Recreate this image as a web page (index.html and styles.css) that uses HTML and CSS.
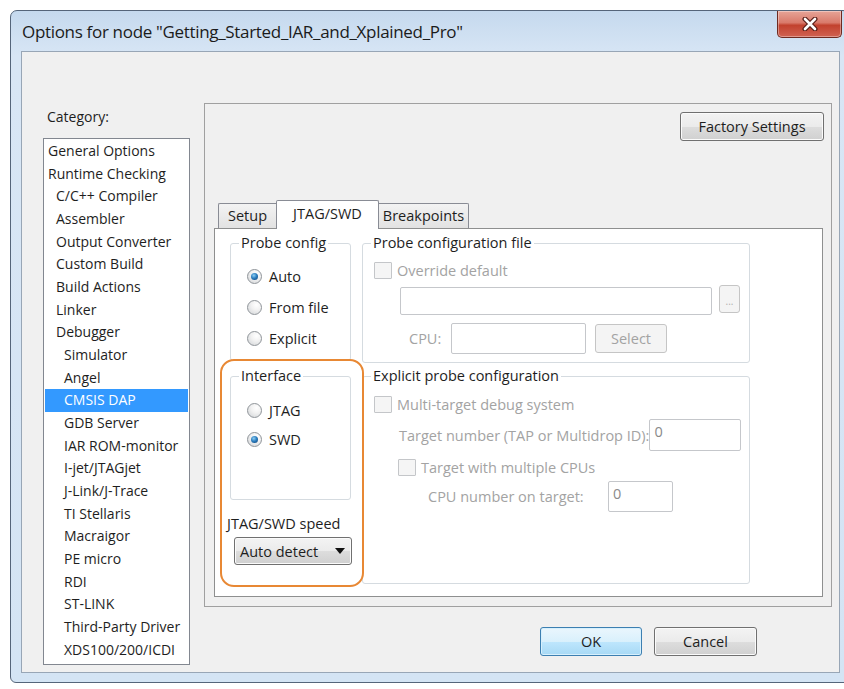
FILE: index.html
```html
<!DOCTYPE html>
<html>
<head>
<meta charset="utf-8">
<title>Options</title>
<link rel="stylesheet" href="styles.css">
</head>
<body>
<div class="window">
  <div class="titlebar">
    <span class="title">Options for node "Getting_Started_IAR_and_Xplained_Pro"</span>
    <div class="close">
      <svg width="18" height="14" viewBox="0 0 18 14">
        <path d="M4 2 L14 12 M14 2 L4 12" stroke="#5a1f18" stroke-width="5" stroke-linecap="round" fill="none"/>
        <path d="M4 2 L14 12 M14 2 L4 12" stroke="#ffffff" stroke-width="2.6" stroke-linecap="round" fill="none"/>
      </svg>
    </div>
  </div>
  <div class="client">
    <div class="leftcol">
      <div class="cat-label">Category:</div>
      <ul class="catlist">
        <li class="l0">General Options</li>
        <li class="l0">Runtime Checking</li>
        <li class="l1">C/C++ Compiler</li>
        <li class="l1">Assembler</li>
        <li class="l1">Output Converter</li>
        <li class="l1">Custom Build</li>
        <li class="l1">Build Actions</li>
        <li class="l1">Linker</li>
        <li class="l1">Debugger</li>
        <li class="l2">Simulator</li>
        <li class="l2">Angel</li>
        <li class="l2 sel">CMSIS DAP</li>
        <li class="l2">GDB Server</li>
        <li class="l2">IAR ROM-monitor</li>
        <li class="l2">I-jet/JTAGjet</li>
        <li class="l2">J-Link/J-Trace</li>
        <li class="l2">TI Stellaris</li>
        <li class="l2">Macraigor</li>
        <li class="l2">PE micro</li>
        <li class="l2">RDI</li>
        <li class="l2">ST-LINK</li>
        <li class="l2">Third-Party Driver</li>
        <li class="l2">XDS100/200/ICDI</li>
      </ul>
    </div>
    <div class="rightcol">
      <div class="panel">
        <div class="panel-top"><div class="btn factory">Factory Settings</div></div>
        <div class="tabs">
          <div class="tab t-setup">Setup</div>
          <div class="tab t-jtag active">JTAG/SWD</div>
          <div class="tab t-bp">Breakpoints</div>
        </div>
        <div class="pane">
          <div class="pcol pleft">
            <fieldset class="grp g-probe">
              <legend>Probe config</legend>
              <div class="opts">
                <div class="radio-row"><span class="radio on"></span><span>Auto</span></div>
                <div class="radio-row"><span class="radio"></span><span>From file</span></div>
                <div class="radio-row"><span class="radio"></span><span>Explicit</span></div>
              </div>
            </fieldset>
            <fieldset class="grp g-iface">
              <legend>Interface</legend>
              <div class="opts opts-iface">
                <div class="radio-row r29"><span class="radio"></span><span>JTAG</span></div>
                <div class="radio-row r29"><span class="radio on"></span><span>SWD</span></div>
              </div>
            </fieldset>
            <div class="speed-label">JTAG/SWD speed</div>
            <div class="combo"><span>Auto detect</span><span class="arrow"></span></div>
          </div>
          <div class="pcol pright">
            <fieldset class="grp g-file">
              <legend>Probe configuration file</legend>
              <div class="inner">
                <div class="chk-row"><span class="chk"></span><span class="dis">Override default</span></div>
                <div class="file-row"><div class="input file-input"></div><div class="dots">...</div></div>
                <div class="cpu-row"><span class="dis cpu-label">CPU:</span><div class="input cpu-input"></div><div class="btn-dis">Select</div></div>
              </div>
            </fieldset>
            <fieldset class="grp g-explicit">
              <legend>Explicit probe configuration</legend>
              <div class="inner">
                <div class="chk-row"><span class="chk"></span><span class="dis">Multi-target debug system</span></div>
                <div class="tn-row"><span class="dis">Target number (TAP or Multidrop ID):</span><div class="input num tn-input">0</div></div>
                <div class="chk-row mc-row"><span class="chk"></span><span class="dis">Target with multiple CPUs</span></div>
                <div class="cn-row"><span class="dis cn-label">CPU number on target:</span><div class="input num cn-input">0</div></div>
              </div>
            </fieldset>
          </div>
          <div class="highlight"></div>
        </div>
      </div>
      <div class="dlg-buttons">
        <div class="btn ok">OK</div>
        <div class="btn cancel">Cancel</div>
      </div>
    </div>
  </div>
</div>
</body>
</html>
```
FILE: styles.css
```css
* { box-sizing: border-box; }
html, body { margin: 0; padding: 0; }
body {
  width: 844px;
  height: 689px;
  overflow: hidden;
  background: #ffffff;
  font-family: "Open Sans", "Noto Sans", sans-serif;
  font-size: 14px;
  color: #1e1e1e;
}

.window {
  margin: 10px 0 0 10px;
  width: 840px;
  height: 673px;
  border: 1px solid #55657a;
  border-radius: 7px 7px 6px 6px;
  background: linear-gradient(#c5d9ee, #d8e6f5 45px, #d4e4f4);
  padding: 0 0 0 10px;
}

.titlebar {
  display: flex;
  align-items: flex-start;
  height: 40px;
}
.title {
  margin: 11px 0 0 1px;
  font-size: 17px;
  line-height: 20px;
  color: #1b1b1b;
  letter-spacing: -0.32px;
}
.close {
  margin-left: auto;
  margin-right: 7px;
  width: 65px;
  height: 27px;
  border: 1px solid #6e2a21;
  border-top: none;
  border-radius: 0 0 5px 5px;
  background: linear-gradient(#e6a497 0%, #d97a6b 45%, #c2412e 55%, #d06252 100%);
  display: flex;
  align-items: center;
  justify-content: center;
  box-shadow: inset 0 0 0 1px rgba(255,255,255,0.35);
}

.client {
  width: 819px;
  height: 622px;
  border: 1px solid #98a6b6;
  background: #f0f0f0;
  display: flex;
  align-items: flex-start;
  padding: 51px 0 0 21px;
}

.leftcol { width: 147px; }
.cat-label {
  margin: 4px 0 0 4px;
  line-height: 20px;
  font-size: 14px;
}
.catlist {
  list-style: none;
  margin: 11px 0 0 0;
  padding: 1px 1px;
  width: 147px;
  height: 527px;
  border: 1px solid #828790;
  background: #ffffff;
}
.catlist li {
  height: 22.68px;
  line-height: 22.68px;
  white-space: nowrap;
  font-size: 14px;
}
.catlist .l0 { padding-left: 3px; }
.catlist .l1 { padding-left: 11px; }
.catlist .l2 { padding-left: 19px; }
.catlist .sel { background: #3399ff; color: #ffffff; }

.rightcol {
  margin-left: 14px;
  width: 628px;
}
.panel {
  height: 504px;
  border: 1px solid #a0a0a0;
  background: #f0f0f0;
  display: flex;
  flex-direction: column;
}
.panel-top {
  display: flex;
  justify-content: flex-end;
  padding: 8px 7px 0 0;
}

.btn {
  height: 29px;
  border: 1px solid #707070;
  border-radius: 3px;
  background: linear-gradient(#f3f3f3 0%, #ebebeb 50%, #dddddd 51%, #d0d0d0 100%);
  box-shadow: inset 0 0 0 1px #fbfbfb;
  display: flex;
  align-items: center;
  justify-content: center;
  font-size: 14.5px;
  color: #1e1e1e;
}
.factory { width: 144px; }

.tabs {
  margin-top: 59px;
  height: 28px;
  display: flex;
  align-items: flex-end;
  padding-left: 13px;
}
.tab {
  height: 25px;
  border: 1px solid #898c95;
  border-bottom: none;
  background: linear-gradient(#f3f3f3, #e2e2e2);
  display: flex;
  justify-content: center;
  padding-top: 2px;
  line-height: 20px;
  font-size: 14.5px;
}
.t-setup { width: 58px; border-right: none; border-radius: 2px 0 0 0; }
.t-jtag { width: 103px; }
.t-bp { width: 90px; border-left: none; border-radius: 0 2px 0 0; }
.tab.active {
  height: 29px;
  background: #ffffff;
  margin-bottom: -1px;
  position: relative;
  z-index: 1;
  padding-top: 3px;
  border-radius: 2px 2px 0 0;
}

.pane {
  position: relative;
  margin-left: 9px;
  width: 609px;
  height: 369px;
  border: 1px solid #8e8f8f;
  background: #ffffff;
  display: flex;
  align-items: flex-start;
  padding: 4px 0 0 15px;
}
.pleft { width: 121px; }
.pright { width: 388px; margin-left: 11px; }

.grp {
  margin: 0;
  padding: 0;
  border: 1px solid #d5dbe0;
  border-radius: 3px;
  min-inline-size: 0;
}
.grp legend {
  margin-left: 8px;
  padding: 0 2px;
  line-height: 20px;
  font-size: 14.5px;
  color: #1e1e1e;
}
.g-probe { height: 128px; }
.g-iface { height: 134px; margin-top: 5px; }
.g-file { height: 130px; }
.g-explicit { height: 218px; margin-top: 3px; }

.opts { padding: 8px 0 0 16px; }
.opts-iface { padding-top: 10px; }
.radio-row {
  display: flex;
  align-items: center;
  height: 31px;
  gap: 7px;
  font-size: 14.5px;
}
.radio-row.r29 { height: 29px; }
.radio {
  width: 15px;
  height: 15px;
  border-radius: 50%;
  border: 1px solid #8f9499;
  background: radial-gradient(circle at 65% 30%, #ffffff 0%, #f2f2f2 40%, #cfd2d5 100%);
  display: flex;
  align-items: center;
  justify-content: center;
  flex: none;
}
.radio.on::after {
  content: "";
  width: 7px;
  height: 7px;
  border-radius: 50%;
  background: radial-gradient(circle at 40% 35%, #8fd0f5 0%, #2d7fc0 45%, #0e3f73 100%);
}

.speed-label {
  margin: 14px 0 0 -3px;
  line-height: 20px;
  font-size: 14.5px;
  white-space: nowrap;
}
.combo {
  margin: 3px 0 0 4px;
  width: 118px;
  height: 28px;
  border: 1px solid #707070;
  border-radius: 3px;
  background: linear-gradient(#f3f3f3 0%, #ebebeb 50%, #dddddd 51%, #d0d0d0 100%);
  box-shadow: inset 0 0 0 1px #fbfbfb;
  display: flex;
  align-items: center;
  padding: 0 6px 0 5px;
  font-size: 14.5px;
}
.combo .arrow {
  margin-left: auto;
  width: 0;
  height: 0;
  border-left: 5px solid transparent;
  border-right: 5px solid transparent;
  border-top: 6px solid #111111;
}

.inner { padding: 7px 8px 0 11px; }
.g-explicit .inner { padding-top: 8px; }
.dis { color: #a3a3a3; font-size: 14.5px; white-space: nowrap; }
.chk-row {
  display: flex;
  align-items: center;
  height: 20px;
  gap: 5px;
}
.chk {
  width: 18px;
  height: 17px;
  border: 1px solid #c4c6c9;
  background: #f5f5f5;
  border-radius: 1px;
  flex: none;
}
.input {
  border: 1px solid #c5c7cb;
  border-radius: 2px;
  background: #ffffff;
}
.file-row {
  display: flex;
  align-items: flex-start;
  margin-top: 5px;
  padding-left: 26px;
}
.file-input { width: 312px; height: 28px; margin-top: 2px; }
.dots {
  margin-left: 7px;
  width: 21px;
  height: 28px;
  border: 1px solid #c5c5c5;
  border-radius: 3px;
  background: #f4f4f4;
  color: #b0b0b0;
  font-size: 10px;
  display: flex;
  align-items: center;
  justify-content: center;
  padding-top: 4px;
}
.cpu-row {
  display: flex;
  align-items: center;
  margin-top: 8px;
  padding-left: 35px;
}
.cpu-label { width: 42px; }
.cpu-input { width: 135px; height: 31px; }
.btn-dis {
  margin-left: 9px;
  width: 72px;
  height: 29px;
  border: 1px solid #c5c5c5;
  border-radius: 3px;
  background: #f4f4f4;
  color: #a3a3a3;
  font-size: 14.5px;
  display: flex;
  align-items: center;
  justify-content: center;
}
.tn-row {
  display: flex;
  align-items: center;
  margin-top: 5px;
  padding-left: 25px;
}
.num {
  color: #8a8a8a;
  font-size: 14.5px;
  padding: 2px 0 0 4px;
  line-height: 20px;
}
.tn-input { margin-left: auto; width: 92px; height: 32px; }
.mc-row { margin-top: 6px; padding-left: 24px; }
.cn-row {
  display: flex;
  align-items: center;
  margin-top: 4px;
  padding-left: 54px;
}
.cn-label { width: 180px; }
.cn-input { width: 65px; height: 31px; }

.highlight {
  position: absolute;
  left: 5px;
  top: 130px;
  width: 144px;
  height: 228px;
  border: 2.5px solid #e88834;
  border-radius: 14px;
  pointer-events: none;
}

.dlg-buttons {
  margin-top: 20px;
  display: flex;
  justify-content: flex-end;
  gap: 12px;
  padding-right: 75px;
}
.ok {
  width: 102px;
  border-color: #3c7fb1;
  background: linear-gradient(#eaf6fd 0%, #d9f0fc 50%, #bee6fd 51%, #a7d9f5 100%);
  box-shadow: inset 0 0 0 1px #d6f0fd;
}
.cancel { width: 103px; }
```
